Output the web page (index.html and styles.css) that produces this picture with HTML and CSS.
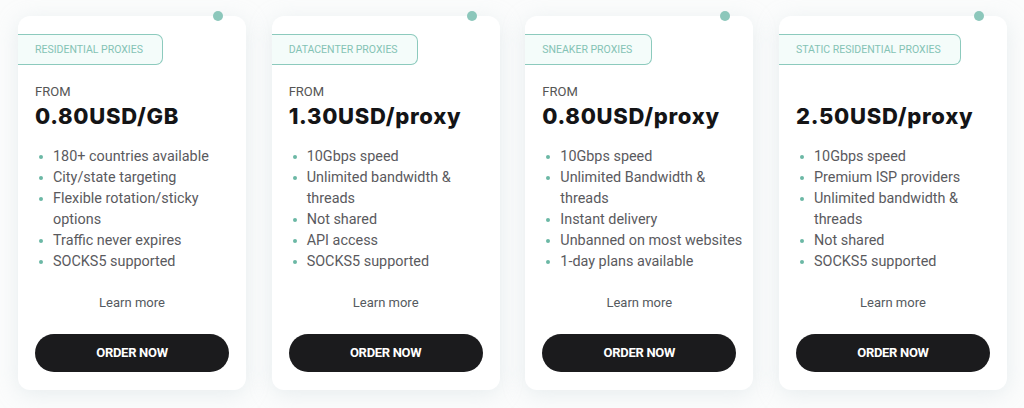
FILE: index.html
```html
<!DOCTYPE html>
<html lang="en">
<head>
<meta charset="utf-8">
<title>Proxy plans</title>
<link rel="stylesheet" href="styles.css">
</head>
<body>
<div class="plans">
  <div class="card">
    <span class="dot"></span>
    <div class="tag">RESIDENTIAL PROXIES</div>
    <div class="body">
      <div class="from">FROM</div>
      <div class="price">0.80USD/GB</div>
      <ul class="features">
        <li>180+ countries available</li>
        <li>City/state targeting</li>
        <li>Flexible rotation/sticky options</li>
        <li>Traffic never expires</li>
        <li>SOCKS5 supported</li>
      </ul>
      <a class="learn" href="#">Learn more</a>
      <a class="order" href="#">ORDER NOW</a>
    </div>
  </div>
  <div class="card">
    <span class="dot"></span>
    <div class="tag">DATACENTER PROXIES</div>
    <div class="body">
      <div class="from">FROM</div>
      <div class="price">1.30USD/proxy</div>
      <ul class="features">
        <li>10Gbps speed</li>
        <li>Unlimited bandwidth &amp; threads</li>
        <li>Not shared</li>
        <li>API access</li>
        <li>SOCKS5 supported</li>
      </ul>
      <a class="learn" href="#">Learn more</a>
      <a class="order" href="#">ORDER NOW</a>
    </div>
  </div>
  <div class="card">
    <span class="dot"></span>
    <div class="tag">SNEAKER PROXIES</div>
    <div class="body">
      <div class="from">FROM</div>
      <div class="price">0.80USD/proxy</div>
      <ul class="features">
        <li>10Gbps speed</li>
        <li>Unlimited Bandwidth &amp; threads</li>
        <li>Instant delivery</li>
        <li>Unbanned on most websites</li>
        <li>1-day plans available</li>
      </ul>
      <a class="learn" href="#">Learn more</a>
      <a class="order" href="#">ORDER NOW</a>
    </div>
  </div>
  <div class="card">
    <span class="dot"></span>
    <div class="tag">STATIC RESIDENTIAL PROXIES</div>
    <div class="body">
      <div class="from">&nbsp;</div>
      <div class="price">2.50USD/proxy</div>
      <ul class="features">
        <li>10Gbps speed</li>
        <li>Premium ISP providers</li>
        <li>Unlimited bandwidth &amp; threads</li>
        <li>Not shared</li>
        <li>SOCKS5 supported</li>
      </ul>
      <a class="learn" href="#">Learn more</a>
      <a class="order" href="#">ORDER NOW</a>
    </div>
  </div>
</div>
</body>
</html>
```
FILE: styles.css
```css
* { box-sizing: border-box; }
html, body { margin: 0; padding: 0; }
body {
  background: #fbfcfc;
  font-family: "Roboto", "Noto Sans", sans-serif;
  width: 1024px;
  height: 408px;
  overflow: hidden;
}
.plans {
  display: flex;
  justify-content: space-between;
  width: 989px;
  margin: 16px 0 0 18px;
}
.card {
  position: relative;
  width: 228px;
  height: 374px;
  background: #fff;
  border-radius: 12px;
  box-shadow: 0 4px 22px rgba(196, 208, 214, 0.35);
  padding-top: 18px;
}
.dot {
  position: absolute;
  top: -5px;
  right: 23px;
  width: 10px;
  height: 10px;
  border-radius: 50%;
  background: #8cc7bb;
}
.tag {
  display: inline-flex;
  align-items: center;
  height: 31px;
  padding: 0 19px 0 17px;
  background: #f4fcfa;
  border: 1px solid #8ccabd;
  border-left: none;
  border-radius: 0 7px 7px 0;
  color: #84c3b5;
  font-size: 10.5px;
}
.body {
  padding: 0 17px;
  display: flex;
  flex-direction: column;
}
.from {
  margin-top: 20px;
  font-size: 13px;
  line-height: 14px;
  color: #555;
}
.price {
  margin-top: 4px;
  font-family: "Inter", sans-serif;
  font-size: 22px;
  line-height: 26px;
  font-weight: 800;
  color: #141416;
  letter-spacing: 0.7px;
}
.features {
  list-style: none;
  margin: 17px -12px 0 0;
  padding: 0 0 0 18px;
  height: 126px;
  font-size: 14.4px;
  line-height: 21px;
  color: #5a5a5e;
}
.features li { position: relative; }
.features li::before {
  content: "";
  position: absolute;
  left: -14px;
  top: 9px;
  width: 4px;
  height: 4px;
  border-radius: 50%;
  background: #6bb8a5;
}
.learn {
  margin-top: 23px;
  align-self: center;
  font-size: 13px;
  line-height: 15px;
  color: #555a60;
  text-decoration: none;
}
.order {
  margin-top: 23.5px;
  height: 38px;
  border-radius: 19px;
  background: #1b1b1d;
  color: #fff;
  display: flex;
  align-items: center;
  justify-content: center;
  font-weight: 700;
  font-size: 13px;
  letter-spacing: -0.3px;
  text-decoration: none;
}
```
